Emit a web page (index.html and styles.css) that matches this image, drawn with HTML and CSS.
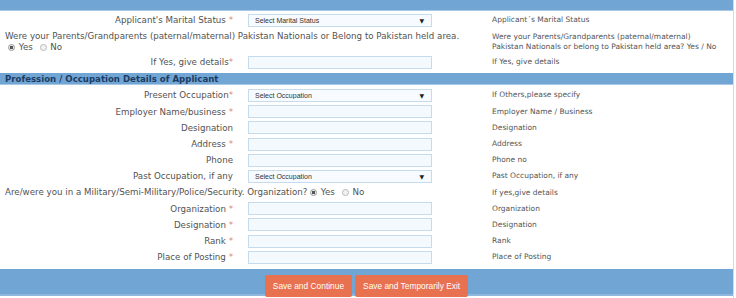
FILE: index.html
```html
<!DOCTYPE html>
<html lang="en">
<head>
    <meta charset="UTF-8">
    <title>Applicant Details</title>
    <link rel="stylesheet" href="styles.css">
</head>
<body>
    <div class="form">
        <div class="bar top-bar"></div>

        <div class="section first">
            <div class="row">
                <label class="lbl">Applicant's Marital Status <span class="req">*</span></label>
                <div class="fld">
                    <span class="sel"><select><option>Select Marital Status</option></select></span>
                </div>
                <div class="hint">Applicant´s Marital Status</div>
            </div>
            <div class="row row-q">
                <div class="q">
                    Were your Parents/Grandparents (paternal/maternal) Pakistan Nationals or Belong to Pakistan held area.
                    <div class="radios">
                        <label><input type="radio" name="parents" checked> Yes</label>
                        <label><input type="radio" name="parents"> No</label>
                    </div>
                </div>
                <div class="hint">Were your Parents/Grandparents (paternal/maternal)<br>Pakistan Nationals or belong to Pakistan held area? Yes / No</div>
            </div>
            <div class="row">
                <label class="lbl">If Yes, give details<span class="req">*</span></label>
                <div class="fld"><input type="text"></div>
                <div class="hint">If Yes, give details</div>
            </div>
        </div>

        <div class="bar section-title">Profession / Occupation Details of Applicant</div>

        <div class="section">
            <div class="row">
                <label class="lbl">Present Occupation<span class="req">*</span></label>
                <div class="fld">
                    <span class="sel"><select><option>Select Occupation</option></select></span>
                </div>
                <div class="hint">If Others,please specify</div>
            </div>
            <div class="row">
                <label class="lbl">Employer Name/business <span class="req">*</span></label>
                <div class="fld"><input type="text"></div>
                <div class="hint">Employer Name / Business</div>
            </div>
            <div class="row">
                <label class="lbl">Designation</label>
                <div class="fld"><input type="text"></div>
                <div class="hint">Designation</div>
            </div>
            <div class="row">
                <label class="lbl">Address <span class="req">*</span></label>
                <div class="fld"><input type="text"></div>
                <div class="hint">Address</div>
            </div>
            <div class="row">
                <label class="lbl">Phone</label>
                <div class="fld"><input type="text"></div>
                <div class="hint">Phone no</div>
            </div>
            <div class="row">
                <label class="lbl">Past Occupation, if any</label>
                <div class="fld">
                    <span class="sel"><select><option>Select Occupation</option></select></span>
                </div>
                <div class="hint">Past Occupation, if any</div>
            </div>
            <div class="row">
                <div class="q q-inline">
                    Are/were you in a Military/Semi-Military/Police/Security. Organization?
                    <label><input type="radio" name="military" checked> Yes</label>
                    <label><input type="radio" name="military"> No</label>
                </div>
                <div class="hint">If yes,give details</div>
            </div>
            <div class="row">
                <label class="lbl">Organization <span class="req">*</span></label>
                <div class="fld"><input type="text"></div>
                <div class="hint">Organization</div>
            </div>
            <div class="row">
                <label class="lbl">Designation <span class="req">*</span></label>
                <div class="fld"><input type="text"></div>
                <div class="hint">Designation</div>
            </div>
            <div class="row">
                <label class="lbl">Rank <span class="req">*</span></label>
                <div class="fld"><input type="text"></div>
                <div class="hint">Rank</div>
            </div>
            <div class="row">
                <label class="lbl">Place of Posting <span class="req">*</span></label>
                <div class="fld"><input type="text"></div>
                <div class="hint">Place of Posting</div>
            </div>
        </div>

        <div class="bar footer-bar">
            <button type="submit" class="btn">Save and Continue</button>
            <button type="button" class="btn">Save and Temporarily Exit</button>
        </div>
    </div>
</body>
</html>
```

FILE: styles.css
```css
body {
    margin: 0;
    background-color: #fff;
    font-family: 'DejaVu Sans', Verdana, sans-serif;
    color: #525252;
}

.form {
    width: 733px;
    min-height: 298px;
    border-right: 1px solid #c8dcee;
}

.bar {
    background-color: #71a5d4;
    border-bottom: 1px solid #a9c8e6;
}

.top-bar {
    height: 10px;
}

.section {
    padding: 2px 0 0;
}

.section.first {
    padding-top: 1px;
}

.row {
    display: grid;
    grid-template-columns: 240px 244px 1fr;
    align-items: center;
    height: 16.2px;
}

.lbl {
    text-align: right;
    padding-right: 7px;
    font-size: 8.7px;
    white-space: nowrap;
}

.req {
    color: #d08686;
}

.fld {
    padding-left: 8px;
    display: flex;
}

input[type="text"],
select {
    display: block;
    width: 184px;
    height: 13px;
    box-sizing: border-box;
    border: 1px solid #c5dcee;
    background-color: #f4f9fe;
    outline: none;
    margin: 0;
}

.sel {
    position: relative;
    display: block;
    width: 184px;
    height: 13px;
}

select {
    appearance: none;
    padding: 0 0 0 6px;
    font-family: 'Liberation Sans', Arial, sans-serif;
    font-size: 7px;
    color: #333;
    background-color: #f7fbff;
}

.sel::after {
    content: "\25BC";
    position: absolute;
    right: 8px;
    top: 3px;
    font-size: 6px;
    line-height: 7px;
    color: #222;
    pointer-events: none;
}

.hint {
    padding-left: 8px;
    font-size: 7.5px;
    line-height: 10px;
    color: #555;
    white-space: nowrap;
}

.row-q {
    height: auto;
    padding: 3px 0 1px;
}

.q {
    grid-column: 1 / 3;
    padding-left: 5px;
    font-size: 8.7px;
    line-height: 11px;
    white-space: nowrap;
}

.radios {
    padding-left: 3px;
}

.q label {
    margin-right: 4px;
}

input[type="radio"] {
    appearance: none;
    width: 7px;
    height: 7px;
    margin: 0 1px 0 0;
    border: 1px solid #b9b9b9;
    border-radius: 50%;
    background-color: #f2f2f2;
    vertical-align: -1px;
    box-sizing: border-box;
}

input[type="radio"]:checked {
    background: radial-gradient(circle, #555 0 1.5px, #eee 2px);
    border-color: #999;
}

.section-title {
    margin-top: 3px;
    height: 11px;
    padding-left: 5px;
    font-size: 8.6px;
    font-weight: bold;
    line-height: 12px;
    color: #1d3c63;
}

.footer-bar {
    margin-top: 4px;
    display: flex;
    justify-content: center;
    align-items: flex-start;
    gap: 3px;
    padding-top: 6px;
    box-sizing: border-box;
    border-bottom: 2px solid #8fb6dc;
    height: 27px;
}

.btn {
    height: 22px;
    padding: 0 8px;
    border: none;
    border-radius: 2px;
    background-color: #e8714f;
    color: #fff;
    font-family: 'Liberation Sans', Arial, sans-serif;
    font-size: 8.4px;
    cursor: pointer;
}

.btn:hover {
    background-color: #d45f3e;
}
```
